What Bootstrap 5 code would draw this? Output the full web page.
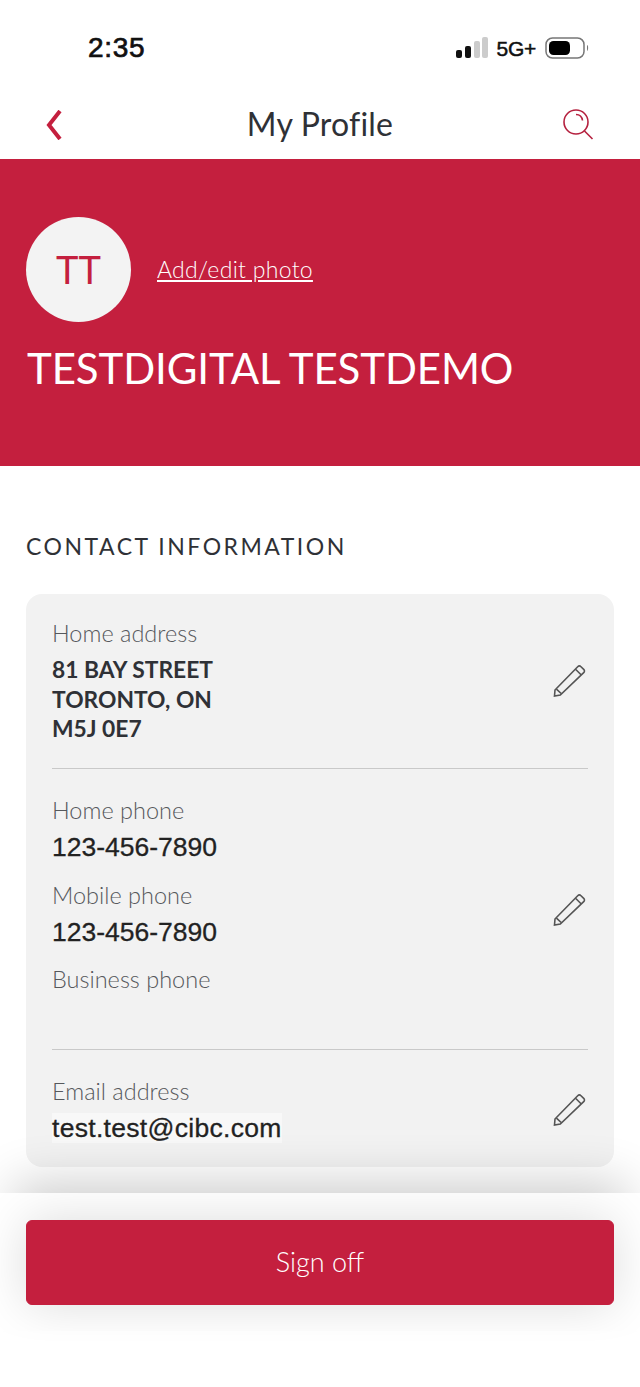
<!DOCTYPE html>
<html lang="en">
<head>
  <meta charset="UTF-8">
  <title>My Profile</title>
  <meta name="viewport" content="width=device-width, initial-scale=1">
  <link href="https://cdn.jsdelivr.net/npm/bootstrap@5.3.3/dist/css/bootstrap.min.css" rel="stylesheet">
  <style>
    body {
      background-color: #fff;
      color: #2f3136;
      font-family: "Lato", "Liberation Sans", sans-serif;
      height: 1387px;
      overflow: hidden;
    }
    .status-row {
      height: 90px;
      padding: 32px 49px 0 88px;
      font-family: "Liberation Sans", sans-serif;
      color: #111;
    }
    .status-time { font-size: 28px; font-weight: 400; -webkit-text-stroke: .7px #111; line-height: 32px; letter-spacing: .7px; }
    .status-net { font-size: 21px; font-weight: 400; -webkit-text-stroke: .5px #111; line-height: 34px; margin: 0 9px 0 8px; letter-spacing: -.3px; }
    .top-bar { height: 69px; padding: 0 46px; }
    .top-title { font-size: 32px; line-height: 68px; letter-spacing: .2px; color: #2f3136; }
    .hero-band {
      background-color: #c41f3e;
      height: 307px;
      padding: 58px 26px 0;
      color: #fff;
    }
    .avatar-disc {
      width: 105px;
      height: 105px;
      background-color: #f3f3f3;
      color: #c41f3e;
      font-size: 38px;
      font-weight: 400;
    }
    .photo-link { color: #fff; font-size: 23px; font-weight: 300; margin-left: 26px; letter-spacing: .3px; }
    .photo-link:hover { color: #fff; }
    .hero-name { font-size: 42px; font-weight: 400; line-height: 50px; margin: 21px 0 0 1px; letter-spacing: -.1px; }
    .section-label {
      font-size: 23px;
      line-height: 28px;
      letter-spacing: 2.5px;
      margin: 66px 26px 34px;
      color: #2f3136;
    }
    .info-panel {
      background-color: #f2f2f2;
      border-radius: 16px;
      margin: 0 26px;
      padding: 0 26px;
      height: 573px;
    }
    .info-group { border-bottom: 1px solid #c9c9c9; }
    .info-group:last-child { border-bottom: 0; }
    .group-a { height: 175px; padding-top: 24px; }
    .group-b { height: 281px; padding-top: 26px; }
    .group-c { padding-top: 26px; }
    .field-label { font-size: 23.5px; font-weight: 300; line-height: 30px; color: #56585c; }
    .field-bold { font-size: 22.8px; font-weight: 700; line-height: 29.5px; margin-top: 7px; color: #2f3136; }
    .field-plain {
      font-family: "Liberation Sans", sans-serif;
      font-size: 26.5px;
      -webkit-text-stroke: .3px #222;
      line-height: 30px;
      margin: 7px 0 17.5px;
      color: #222;
    }
    .mail-value { background-color: #f8f8f8; letter-spacing: .3px; }
    .pencil { width: 34px; height: 34px; margin-right: 1px; flex: none; }
    .pencil-a { margin-top: 46px; }
    .pencil-b { margin-top: 98px; }
    .pencil-c { margin-top: 17px; }
    .footer-bar {
      position: absolute;
      left: 0;
      right: 0;
      top: 1193px;
      height: 138px;
      background: #fff;
      overflow: hidden;
      box-shadow: 0 -24px 50px -14px rgba(0, 0, 0, .2);
      padding: 27px 26px 0;
    }
    .sign-off {
      background-color: #c41f3e;
      border-color: #c41f3e;
      color: #fff;
      height: 85px;
      font-size: 27px;
      font-weight: 300;
      border-radius: 6px;
      box-shadow: 0 0 50px rgba(0, 0, 0, .14);
    }
    .sign-off:hover { background-color: #c41f3e; border-color: #c41f3e; color: #fff; }
    .page-floor { position: absolute; left: 0; right: 0; top: 1331px; bottom: 0; background: #fff; }
  </style>
</head>
<body>
  <!-- status bar -->
  <div class="status-row d-flex justify-content-between">
    <div class="status-time">2:35</div>
    <div class="d-flex align-items-start">
      <svg width="34" height="32" viewBox="0 0 34 32">
        <rect x="1" y="18" width="6" height="8" rx="2" fill="#111"/>
        <rect x="10" y="14" width="6" height="12" rx="2" fill="#111"/>
        <rect x="19" y="9" width="6" height="17" rx="2" fill="#ccc"/>
        <rect x="27" y="5" width="6" height="21" rx="2" fill="#ccc"/>
      </svg>
      <span class="status-net">5G+</span>
      <svg width="46" height="32" viewBox="0 0 46 32">
        <rect x="1" y="6" width="38" height="20" rx="6.5" fill="none" stroke="#777" stroke-width="1.5"/>
        <rect x="4" y="9" width="21" height="14" rx="4.5" fill="#000"/>
        <path d="M42 13c1.500.5 1.500 5 0 6z" fill="#777"/>
      </svg>
    </div>
  </div>

  <!-- title bar -->
  <div class="top-bar d-flex align-items-center justify-content-between position-relative">
    <svg width="16" height="30" viewBox="0 0 16 30">
      <path d="M14 1 3 15l11 14" fill="none" stroke="#c41f3e" stroke-width="4"/>
    </svg>
    <div class="top-title position-absolute top-0 start-50 translate-middle-x">My Profile</div>
    <svg width="32" height="32" viewBox="0 0 32 32">
      <circle cx="14" cy="13" r="12" fill="none" stroke="#b5213f" stroke-width="1.600"/>
      <path d="M14 5.500c3.500 0 6 2.500 6.500 6M22.500 22 30.500 30" fill="none" stroke="#b5213f" stroke-width="1.600"/>
    </svg>
  </div>

  <!-- red header -->
  <div class="hero-band">
    <div class="d-flex align-items-center">
      <div class="avatar-disc rounded-circle d-flex align-items-center justify-content-center">TT</div>
      <a href="#" class="photo-link">Add/edit photo</a>
    </div>
    <h1 class="hero-name">TESTDIGITAL TESTDEMO</h1>
  </div>

  <div class="section-label">CONTACT INFORMATION</div>

  <div class="info-panel">
    <div class="info-group group-a d-flex justify-content-between align-items-start">
      <div>
        <div class="field-label">Home address</div>
        <div class="field-bold">81 BAY STREET<br>TORONTO, ON<br>M5J 0E7</div>
      </div>
      <svg class="pencil pencil-a" viewBox="0 0 34 34" fill="none" stroke="#555" stroke-width="1.600">
        <path d="M2 26 24.700 2.700c1-1 2.300-1 3.300 0l2.700 2.700c1 1 1 2.300 0 3.300L7.300 31l-5.800 1zM22.300 5l6 6M3.700 25.300l5 4.700"/>
      </svg>
    </div>
    <div class="info-group group-b d-flex justify-content-between align-items-start">
      <div>
        <div class="field-label">Home phone</div>
        <div class="field-plain">123-456-7890</div>
        <div class="field-label">Mobile phone</div>
        <div class="field-plain">123-456-7890</div>
        <div class="field-label">Business phone</div>
      </div>
      <svg class="pencil pencil-b" viewBox="0 0 34 34" fill="none" stroke="#555" stroke-width="1.600">
        <path d="M2 26 24.700 2.700c1-1 2.300-1 3.300 0l2.700 2.700c1 1 1 2.300 0 3.300L7.300 31l-5.800 1zM22.300 5l6 6M3.700 25.300l5 4.700"/>
      </svg>
    </div>
    <div class="info-group group-c d-flex justify-content-between align-items-start">
      <div>
        <div class="field-label">Email address</div>
        <div class="field-plain"><span class="mail-value">test.test@cibc.com</span></div>
      </div>
      <svg class="pencil pencil-c" viewBox="0 0 34 34" fill="none" stroke="#555" stroke-width="1.600">
        <path d="M2 26 24.700 2.700c1-1 2.300-1 3.300 0l2.700 2.700c1 1 1 2.300 0 3.300L7.300 31l-5.800 1zM22.300 5l6 6M3.700 25.300l5 4.700"/>
      </svg>
    </div>
  </div>

  <div class="page-floor"></div>
  <div class="footer-bar">
    <button type="button" class="btn sign-off w-100">Sign off</button>
  </div>

  <script src="https://cdn.jsdelivr.net/npm/bootstrap@5.3.3/dist/js/bootstrap.bundle.min.js"></script>
</body>
</html>
